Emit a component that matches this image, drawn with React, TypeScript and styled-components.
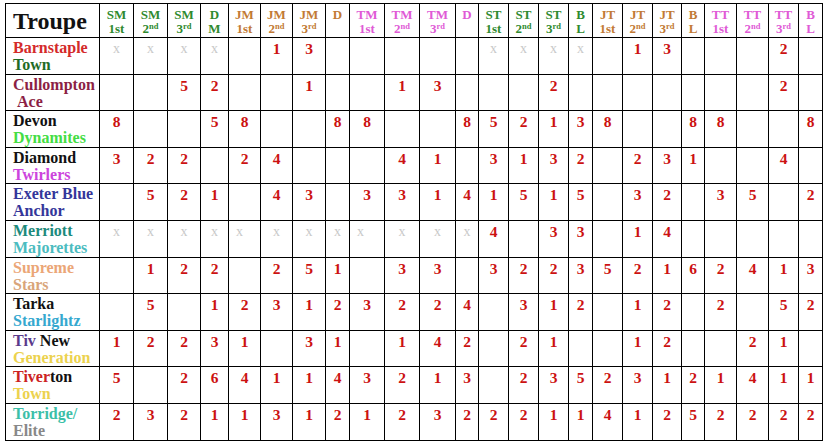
import React from 'react';
import styled, { createGlobalStyle } from 'styled-components';

const GlobalStyle = createGlobalStyle`
  body {
    margin: 0;
    background: #ffffff;
    font-family: 'Liberation Serif', 'Times New Roman', serif;
  }
`;

const RED = '#cc1111';
const GREEN = '#2f8a2f';
const BROWN = '#c27a34';
const PINK = '#e05ad6';

const colWidths = [94, 34, 34, 33, 28, 32, 32, 33, 24, 35, 35, 36, 23, 30, 30, 30, 24, 30, 30, 29, 23, 32, 32, 30, 24];

const headers: { top: string; base?: string; sup?: string; color: string }[] = [
  { top: 'SM', base: '1st', color: GREEN },
  { top: 'SM', base: '2', sup: 'nd', color: GREEN },
  { top: 'SM', base: '3', sup: 'rd', color: GREEN },
  { top: 'D', base: 'M', color: GREEN },
  { top: 'JM', base: '1st', color: BROWN },
  { top: 'JM', base: '2', sup: 'nd', color: BROWN },
  { top: 'JM', base: '3', sup: 'rd', color: BROWN },
  { top: 'D', color: BROWN },
  { top: 'TM', base: '1st', color: PINK },
  { top: 'TM', base: '2', sup: 'nd', color: PINK },
  { top: 'TM', base: '3', sup: 'rd', color: PINK },
  { top: 'D', color: PINK },
  { top: 'ST', base: '1st', color: GREEN },
  { top: 'ST', base: '2', sup: 'nd', color: GREEN },
  { top: 'ST', base: '3', sup: 'rd', color: GREEN },
  { top: 'B', base: 'L', color: GREEN },
  { top: 'JT', base: '1st', color: BROWN },
  { top: 'JT', base: '2', sup: 'nd', color: BROWN },
  { top: 'JT', base: '3', sup: 'rd', color: BROWN },
  { top: 'B', base: 'L', color: BROWN },
  { top: 'TT', base: '1st', color: PINK },
  { top: 'TT', base: '2', sup: 'nd', color: PINK },
  { top: 'TT', base: '3', sup: 'rd', color: PINK },
  { top: 'B', base: 'L', color: PINK },
];

type Seg = [string, string];

const teams: { name: Seg[][]; scores: string[] }[] = [
  {
    name: [[['Barnstaple', '#d42a2a']], [['Town', '#1f6b25']]],
    scores: ['x', 'x', 'x', 'x', '', '1', '3', '', '', '', '', '', 'x', 'x', 'x', 'x', '', '1', '3', '', '', '', '2', ''],
  },
  {
    name: [[['Cullompton', '#8c1f45']], [['\u00a0Ace', '#8c1f45']]],
    scores: ['', '', '5', '2', '', '', '1', '', '', '1', '3', '', '', '', '2', '', '', '', '', '', '', '', '2', ''],
  },
  {
    name: [[['Devon', '#111111']], [['Dynamites', '#44dd44']]],
    scores: ['8', '', '', '5', '8', '', '', '8', '8', '', '', '8', '5', '2', '1', '3', '8', '', '', '8', '8', '', '', '8'],
  },
  {
    name: [[['Diamond', '#111111']], [['Twirlers', '#cc44dd']]],
    scores: ['3', '2', '2', '', '2', '4', '', '', '', '4', '1', '', '3', '1', '3', '2', '', '2', '3', '1', '', '', '4', ''],
  },
  {
    name: [[['Exeter Blue', '#34369a']], [['Anchor', '#34369a']]],
    scores: ['', '5', '2', '1', '', '4', '3', '', '3', '3', '1', '4', '1', '5', '1', '5', '', '3', '2', '', '3', '5', '', '2'],
  },
  {
    name: [[['Merriott', '#1d8a7c']], [['Majorettes', '#4cbcc0']]],
    scores: ['x', 'x', 'x', 'x', 'x<', 'x', 'x', 'x', 'x<', 'x', 'x', 'x', '4', '', '3', '3', '', '1', '4', '', '', '', '', ''],
  },
  {
    name: [[['Supreme', '#eba677']], [['Stars', '#d9a57a']]],
    scores: ['', '1', '2', '2', '', '2', '5', '1', '', '3', '3', '', '3', '2', '2', '3', '5', '2', '1', '6', '2', '4', '1', '3'],
  },
  {
    name: [[['Tarka', '#111111']], [['Starlightz', '#35a8cf']]],
    scores: ['', '5', '', '1', '2', '3', '1', '2', '3', '2', '2', '4', '', '3', '1', '2', '', '1', '2', '', '2', '', '5', '2'],
  },
  {
    name: [[['Tiv ', '#5a3a8c'], ['New', '#111111']], [['Generation', '#ecd24e']]],
    scores: ['1', '2', '2', '3', '1', '', '3', '1', '', '1', '4', '2', '', '2', '1', '', '', '1', '2', '', '', '2', '1', ''],
  },
  {
    name: [[['Tiver', '#cc2222'], ['ton', '#111111']], [['Town', '#ecd24e']]],
    scores: ['5', '', '2', '6', '4', '1', '1', '4', '3', '2', '1', '3', '', '2', '3', '5', '2', '3', '1', '2', '1', '4', '1', '1'],
  },
  {
    name: [[['Torridge/', '#3cbfa8']], [['Elite', '#888888']]],
    scores: ['2', '3', '2', '1', '1', '3', '1', '2', '1', '2', '3', '2', '2', '2', '1', '1', '4', '1', '2', '5', '2', '2', '2', '2'],
  },
];

const Wrap = styled.div`
  padding: 3px 0 0 5px;
`;

const Table = styled.table`
  border-collapse: collapse;
  table-layout: fixed;
  width: 817px;
  font-family: 'Liberation Serif', 'Times New Roman', serif;
  font-weight: bold;

  td,
  th {
    border: 1px solid #000;
    padding: 0;
  }
`;

const HeadRow = styled.tr`
  height: 34px;
`;

const TitleCell = styled.th`
  font-size: 24px;
  text-align: left;
  padding: 2px 0 0 7px !important;
  color: #111;
  vertical-align: middle;
`;

const HeadCell = styled.th<{ $color: string }>`
  color: ${(p) => p.$color};
  font-size: 13px;
  line-height: 14px;
  text-align: center;
  vertical-align: top;
  padding-top: 4px !important;

  sup {
    font-size: 8.5px;
    line-height: 0;
    vertical-align: 4px;
  }
`;

const BodyRow = styled.tr`
  height: 36.6px;
`;

const TeamCell = styled.td`
  font-size: 16px;
  line-height: 17px;
  vertical-align: top;
  padding: 1px 0 0 7px !important;
  white-space: nowrap;
  overflow: hidden;
`;

const Seg = styled.span<{ $color: string }>`
  color: ${(p) => p.$color};
`;

const ScoreCell = styled.td<{ $cross: boolean; $left: boolean }>`
  color: ${(p) => (p.$cross ? '#c9c9c9' : RED)};
  font-weight: ${(p) => (p.$cross ? 'normal' : 'bold')};
  font-size: ${(p) => (p.$cross ? '14px' : '15.5px')};
  line-height: 18px;
  text-align: ${(p) => (p.$left ? 'left' : 'center')};
  padding: 2px 0 0 ${(p) => (p.$left ? '7px' : '0')} !important;
  vertical-align: top;
`;

const App = () => {
  return (
    <>
      <GlobalStyle />
      <Wrap>
        <Table>
          <colgroup>
            {colWidths.map((w, i) => (
              <col key={i} style={{ width: w }} />
            ))}
          </colgroup>
          <thead>
            <HeadRow>
              <TitleCell>Troupe</TitleCell>
              {headers.map((h, i) => (
                <HeadCell key={i} $color={h.color}>
                  {h.top}
                  {h.base && (
                    <>
                      <br />
                      {h.base}
                      {h.sup && <sup>{h.sup}</sup>}
                    </>
                  )}
                </HeadCell>
              ))}
            </HeadRow>
          </thead>
          <tbody>
            {teams.map((t, r) => (
              <BodyRow key={r}>
                <TeamCell>
                  {t.name.map((line, li) => (
                    <div key={li}>
                      {line.map(([text, color], si) => (
                        <Seg key={si} $color={color}>
                          {text}
                        </Seg>
                      ))}
                    </div>
                  ))}
                </TeamCell>
                {t.scores.map((s, c) => {
                  const left = s.endsWith('<');
                  const v = left ? s.slice(0, -1) : s;
                  return (
                    <ScoreCell key={c} $cross={v === 'x'} $left={left}>
                      {v}
                    </ScoreCell>
                  );
                })}
              </BodyRow>
            ))}
          </tbody>
        </Table>
      </Wrap>
    </>
  );
};

export default App;
